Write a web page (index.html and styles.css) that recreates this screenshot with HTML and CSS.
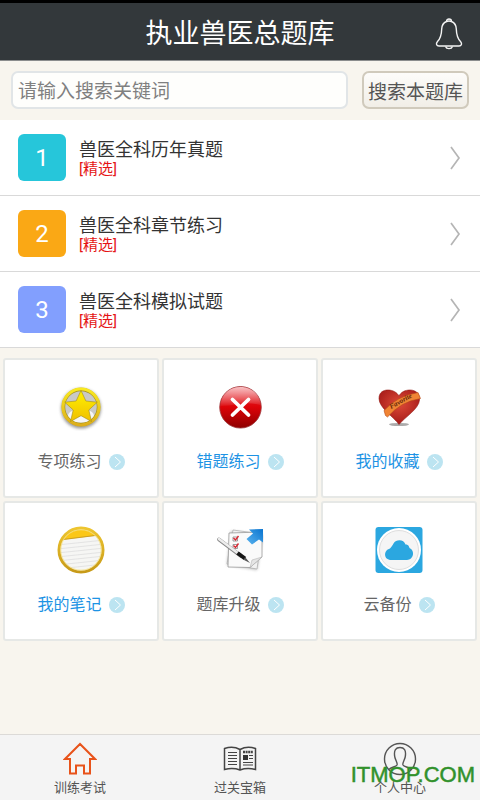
FILE: index.html
```html
<!DOCTYPE html>
<html lang="zh-CN">
<head>
<meta charset="utf-8">
<meta name="viewport" content="width=device-width, initial-scale=1">
<title>执业兽医总题库</title>
<link rel="stylesheet" href="styles.css">
</head>
<body>
<svg class="defs" aria-hidden="true">
  <defs>
    <linearGradient id="gold" x1="0" y1="0" x2="0" y2="1"><stop offset="0" stop-color="#f9e920"/><stop offset="1" stop-color="#dcae1c"/></linearGradient>
    <linearGradient id="star" x1="0" y1="0" x2="0" y2="1"><stop offset="0" stop-color="#fff200"/><stop offset="1" stop-color="#f0bf00"/></linearGradient>
    <linearGradient id="red" x1="0" y1="0" x2="0" y2="1"><stop offset="0" stop-color="#e93038"/><stop offset=".5" stop-color="#dc0308"/><stop offset="1" stop-color="#8e0000"/></linearGradient>
    <linearGradient id="gloss" x1="0" y1="0" x2="0" y2="1"><stop offset="0" stop-color="#fff" stop-opacity=".7"/><stop offset="1" stop-color="#fff" stop-opacity=".05"/></linearGradient>
    <radialGradient id="heart" cx=".5" cy=".4" r=".6"><stop offset="0" stop-color="#dd4a38"/><stop offset="1" stop-color="#a51a18"/></radialGradient>
    <linearGradient id="ring" x1="0" y1="0" x2="0" y2="1"><stop offset="0" stop-color="#eec52f"/><stop offset="1" stop-color="#c79a18"/></linearGradient>
    <linearGradient id="blue" x1="0" y1="1" x2="1" y2="0"><stop offset="0" stop-color="#5ab4f0"/><stop offset="1" stop-color="#0a74cf"/></linearGradient>
    <filter id="soft" x="-30%" y="-30%" width="160%" height="160%"><feGaussianBlur stdDeviation="1.5"/></filter>
    <clipPath id="note"><circle cx="24" cy="24" r="20.5"/></clipPath>
    <symbol id="go" viewBox="0 0 16 16"><circle cx="8" cy="8" r="8" fill="#bce4f1"/><path d="M6 3l5.500 5-5.500 5" fill="none" stroke="#fff" stroke-width="1"/></symbol>
    <symbol id="chevron" viewBox="0 0 12 24"><path d="M2 1l8 11-8 11" fill="none" stroke="#b5b5b5" stroke-width="1.700"/></symbol>
  </defs>
</svg>

<header class="header">
  <h1 class="title">执业兽医总题库</h1>
  <button class="bell" type="button" aria-label="通知">
    <svg width="28" height="32" viewBox="0 0 28 32" fill="none" stroke="#f4f4f4" stroke-width="1.400"><path d="M11.500 3.500C11.500 .2 16.500 .2 16.500 3.500C20 5 21.200 7.500 21.300 11C21.500 18 22.500 20.500 25.500 23.500C27.500 25.800 26.500 28 24 28H4C1.500 28 .5 25.800 2.500 23.500C5.500 20.500 6.500 18 6.700 11C6.800 7.500 8 5 11.500 3.500Z"/><path d="M10.500 28.500C11.500 31.300 16.500 31.300 17.500 28.500"/><path d="M11.500 3.500Q14 2.600 16.500 3.500"/></svg>
  </button>
</header>

<main class="main">
  <form class="search">
    <input class="search-box" type="text" placeholder="请输入搜索关键词" aria-label="请输入搜索关键词">
    <button class="search-button" type="button">搜索本题库</button>
  </form>

  <nav class="list">
    <a class="row" href="#">
      <span class="number cyan">1</span>
      <span class="row-text"><span class="row-title">兽医全科历年真题</span><span class="tag">[精选]</span></span>
      <svg class="chevron"><use href="#chevron"/></svg>
    </a>
    <a class="row" href="#">
      <span class="number orange">2</span>
      <span class="row-text"><span class="row-title">兽医全科章节练习</span><span class="tag">[精选]</span></span>
      <svg class="chevron"><use href="#chevron"/></svg>
    </a>
    <a class="row" href="#">
      <span class="number violet">3</span>
      <span class="row-text"><span class="row-title">兽医全科模拟试题</span><span class="tag">[精选]</span></span>
      <svg class="chevron"><use href="#chevron"/></svg>
    </a>
  </nav>

  <section class="grid">
    <a class="card" href="#">
      <svg class="icon" viewBox="0 0 48 48">
        <circle cx="24" cy="25.500" r="20" fill="#777" opacity=".75" filter="url(#soft)"/>
        <circle cx="24" cy="24" r="17" fill="#c9c9c6"/>
        <ellipse cx="24" cy="33" rx="13" ry="7" fill="#f6f6f6"/>
        <circle cx="24" cy="24" r="17.500" fill="none" stroke="#a08c1c" stroke-width="3.400"/>
        <circle cx="24" cy="24" r="18" fill="none" stroke="url(#gold)" stroke-width="3.200"/>
        <path d="M24 7.500l4.900 10.500 11.400 1.200-8.500 7.800 2.700 11.500L24 32.700 13.500 38.500l2.700-11.500-8.500-7.800 11.400-1.200z" fill="url(#star)" stroke="#a08c1c" stroke-width=".6"/>
      </svg>
      <span class="label">专项练习<svg class="go"><use href="#go"/></svg></span>
    </a>
    <a class="card blue" href="#">
      <svg class="icon" viewBox="0 0 48 48">
        <circle cx="24.500" cy="24.300" r="20.800" fill="url(#red)" stroke="#9d3a3e" stroke-width=".8"/>
        <path d="M4.500 23C5 11 14 4 24.500 4S44 11 44.500 22Q33 19 23 21T4.500 23Z" fill="url(#gloss)"/>
        <path d="M16.500 16.500l16 15.500m0-15.500l-16 15.500" stroke="#fff" stroke-width="3.800" stroke-linecap="round"/>
      </svg>
      <span class="label">错题练习<svg class="go"><use href="#go"/></svg></span>
    </a>
    <a class="card blue" href="#">
      <svg class="icon" viewBox="0 0 48 48">
        <ellipse cx="24" cy="41.500" rx="10" ry="1.600" fill="#888" opacity=".7"/>
        <path d="M24 41.500C19 34 4 25 4 15.500C4 9 8.500 7 13 7C18 7 22 9.500 24 13C26 9 30 7 35 7C41 7 45 11 44.500 17C44 26 30 34 24 41.500Z" fill="url(#heart)" stroke="#951d18" stroke-width=".6"/>
        <path d="M9 27.500Q22 13 43 9.500L45.500 15.500Q26 18.500 12.500 34L10.500 32.500Z" fill="#f08434" stroke="#b54818" stroke-width=".6"/>
        <text class="ribbon" x="16" y="26" transform="rotate(-29 16 26)">Favorite</text>
      </svg>
      <span class="label">我的收藏<svg class="go"><use href="#go"/></svg></span>
    </a>
    <a class="card blue" href="#">
      <svg class="icon" viewBox="0 0 48 48">
        <circle cx="24" cy="24" r="21" fill="#f6f6f4"/>
        <g clip-path="url(#note)">
          <path d="M0 0H48V8.500L0 14.500Z" fill="#fbc718"/>
          <path d="M0 14.300L48 8.300" stroke="#b48b22" stroke-width=".7"/>
          <path d="M0 19l48-5M0 23l48-5M0 27l48-5M0 31l48-5M0 35l48-5M0 39l48-5M0 43l48-5" stroke="#dedede" stroke-width=".8"/>
        </g>
        <circle cx="24" cy="24" r="22" fill="none" stroke="url(#ring)" stroke-width="3"/>
        <circle cx="24" cy="24" r="20.200" fill="none" stroke="#f5df83" stroke-width=".8"/>
      </svg>
      <span class="label">我的笔记<svg class="go"><use href="#go"/></svg></span>
    </a>
    <a class="card" href="#">
      <svg class="icon" viewBox="0 0 48 48">
        <path d="M15 5L47 9L41 44L11 39Z" fill="#888" opacity=".6" filter="url(#soft)"/>
        <path d="M17 4L46 8L41 43L11 38Z" fill="#f1f1f1" stroke="#aaa" stroke-width=".7"/>
        <path d="M13 7L46 6V31L34 41.500L12 41Z" fill="#fafafa" stroke="#999" stroke-width=".8"/>
        <path d="M46 31L36 34L34 41.500Z" fill="#e5e5e5" stroke="#aaa" stroke-width=".5"/>
        <path d="M17 11h4.500v4H17zM17 18.500h4.500v4H17z" fill="#fff" stroke="#777" stroke-width=".7"/>
        <path d="M17.500 12l2 2 3-4M17.500 19.500l2 2 3-4" fill="none" stroke="#d82732" stroke-width="1.400"/>
        <path d="M3 13.500L25 30" stroke="#888" stroke-width="3.800" stroke-linecap="round"/>
        <path d="M3 13L25 29.500" stroke="#ededed" stroke-width="2.600" stroke-linecap="round"/>
        <path d="M21.500 27L29 32.500" stroke="#161616" stroke-width="4"/>
        <path d="M29 31l5 6-6-3z" fill="#555"/>
        <path d="M33 3.500L47 3V16.500L43 13.500L36 18.500L30.500 13L37 7.500Z" fill="url(#blue)"/>
      </svg>
      <span class="label">题库升级<svg class="go"><use href="#go"/></svg></span>
    </a>
    <a class="card" href="#">
      <svg class="icon" viewBox="0 0 48 48">
        <rect x=".5" y="1" width="47" height="46" rx="3" fill="#2ba7e0"/>
        <circle cx="24" cy="24" r="22" fill="#fff"/>
        <circle cx="24" cy="24" r="19.500" fill="#f5f5f5" stroke="#dedede" stroke-width="1"/>
        <path d="M16.500 34C8 34 8.500 24 15 22.500C17 20 17.500 19.500 18.500 17.500C21 13 29 13 30.500 18.500C34 18.500 34 21 34.500 22C40.500 24.500 38.500 34 32 34Z" fill="#2ba7e0"/>
      </svg>
      <span class="label">云备份<svg class="go"><use href="#go"/></svg></span>
    </a>
  </section>
</main>

<nav class="tabs">
  <a class="tab" href="#">
    <svg class="tab-icon" viewBox="0 0 34 34" fill="none" stroke="#e8531a" stroke-width="2"><path d="M17 2L2 17H7V31.500H13V23.500H21V31.500H27V17H32Z"/></svg>
    <span>训练考试</span>
  </a>
  <a class="tab" href="#">
    <svg class="tab-icon" viewBox="0 0 34 34" fill="none" stroke="#444" stroke-width="1.500"><path d="M17 7.500Q10 3.500 1.500 6.500V27.500Q10 25.500 17 28Q24 25.500 32.500 27.500V6.500Q24 3.500 17 7.500V28"/><path d="M5 10.500h9M5 13.500h9M5 16.500h9M5 19.500h9M5 22.500h9M26 13.500h4M26 16.500h4M20 20.500h10M20 23h10" stroke-width="1.200"/><path d="M20 10h10" stroke-width="2.600" stroke-dasharray="2 .6"/><path d="M20 13h5v5h-5z" fill="#333" stroke="none"/></svg>
    <span>过关宝箱</span>
  </a>
  <a class="tab" href="#">
    <svg class="tab-icon" viewBox="0 0 34 34" fill="none" stroke="#555" stroke-width="1.400"><circle cx="17" cy="17" r="15.500"/><path d="M6 27.500C8 25 13 25 14 23C14.800 20.500 12.500 18.500 11.800 15C10.500 8 13 5.500 17 5.500S23.500 8 22.200 15C21.500 18.500 19.200 20.500 20 23C21 25 26 25 28 27.500"/></svg>
    <span>个人中心</span>
  </a>
  <span class="watermark">ITMOP.COM</span>
</nav>
</body>
</html>
```
FILE: styles.css
```css
* {
  box-sizing: border-box;
}

body {
  margin: 0;
  min-height: 100vh;
  display: flex;
  flex-direction: column;
  background: #f8f5ee;
  color: #333;
  font-family: Roboto, "Noto Sans CJK SC", sans-serif;
}

a {
  color: inherit;
  text-decoration: none;
}

button,
input {
  font: inherit;
}

.defs {
  position: absolute;
  width: 0;
  height: 0;
}

.header {
  display: grid;
  grid-template-columns: 1fr auto 1fr;
  align-items: center;
  height: 61px;
  padding-right: 17px;
  border-top: 3px solid #000;
  border-bottom: 1px solid #8b8d8d;
  background: #33383b;
}

.title {
  grid-column: 2;
  margin: 0;
  padding: 4px 0 0 17px;
  color: #fff;
  font-size: 27px;
  font-weight: 400;
  line-height: 40px;
}

.bell {
  justify-self: end;
  display: flex;
  padding: 5px 0 0;
  border: 0;
  background: none;
}

.search {
  display: flex;
  gap: 14px;
  padding: 10px 11px 11px;
}

.search-box,
.search-button {
  height: 38px;
  border-radius: 7px;
  font-size: 19px;
}

.search-box {
  flex: 1;
  min-width: 0;
  padding: 3px 5px 0;
  border: 2px solid #e1e5e7;
  background: #fefefc;
}

.search-box::placeholder {
  color: #808080;
  opacity: 1;
}

.search-button {
  padding: 0 4px;
  border: 2px solid #d0cabc;
  background: linear-gradient(#fdfcfa, #f1eee7);
  color: #555;
}

.list {
  background: #fff;
}

.row {
  display: flex;
  align-items: center;
  gap: 13px;
  height: 76px;
  padding: 0 19px 0 18px;
  border-bottom: 1px solid #d9d9d9;
}

.number {
  width: 48px;
  height: 47px;
  border-radius: 6px;
  color: #fff;
  font-size: 24px;
  line-height: 48px;
  text-align: center;
}

.cyan {
  background: #26c6da;
}

.orange {
  background: #faa815;
}

.violet {
  background: #829ffe;
}

.row-text {
  flex: 1;
  display: flex;
  flex-direction: column;
  padding-top: 1px;
}

.row-title {
  font-size: 18px;
  line-height: 22px;
}

.tag {
  color: #e51414;
  font-size: 15px;
  line-height: 17px;
}

.chevron {
  width: 12px;
  height: 24px;
}

.grid {
  display: grid;
  grid-template-columns: repeat(3, 1fr);
  gap: 3px;
  padding: 10px 3px;
}

.card {
  display: flex;
  flex-direction: column;
  align-items: center;
  gap: 19px;
  height: 140px;
  padding-top: 23px;
  border: 2px solid #e6e8e6;
  border-radius: 3px;
  background: #fff;
  color: #666;
}

.blue {
  color: #1d93e4;
}

.icon {
  width: 48px;
  height: 48px;
}

.label {
  display: flex;
  align-items: center;
  gap: 7px;
  font-size: 16px;
  line-height: 24px;
}

.go {
  width: 16px;
  height: 16px;
}

.ribbon {
  fill: #5e2408;
  font: italic bold 7px "Liberation Serif", serif;
}

.tabs {
  position: relative;
  display: grid;
  grid-template-columns: repeat(3, 1fr);
  height: 66px;
  margin-top: auto;
  border-top: 1px solid #dcdad7;
  background: #f4f4f4;
}

.tab {
  display: flex;
  flex-direction: column;
  align-items: center;
  gap: 3px;
  padding-top: 7px;
  color: #555;
  font-size: 13px;
  line-height: 18px;
}

.tab-icon {
  width: 34px;
  height: 34px;
}

.watermark {
  position: absolute;
  right: 5px;
  bottom: 12px;
  color: #31912b;
  font-family: "Liberation Sans", sans-serif;
  font-size: 22px;
  line-height: 26px;
  -webkit-text-stroke: 0.5px #31912b;
}
```
